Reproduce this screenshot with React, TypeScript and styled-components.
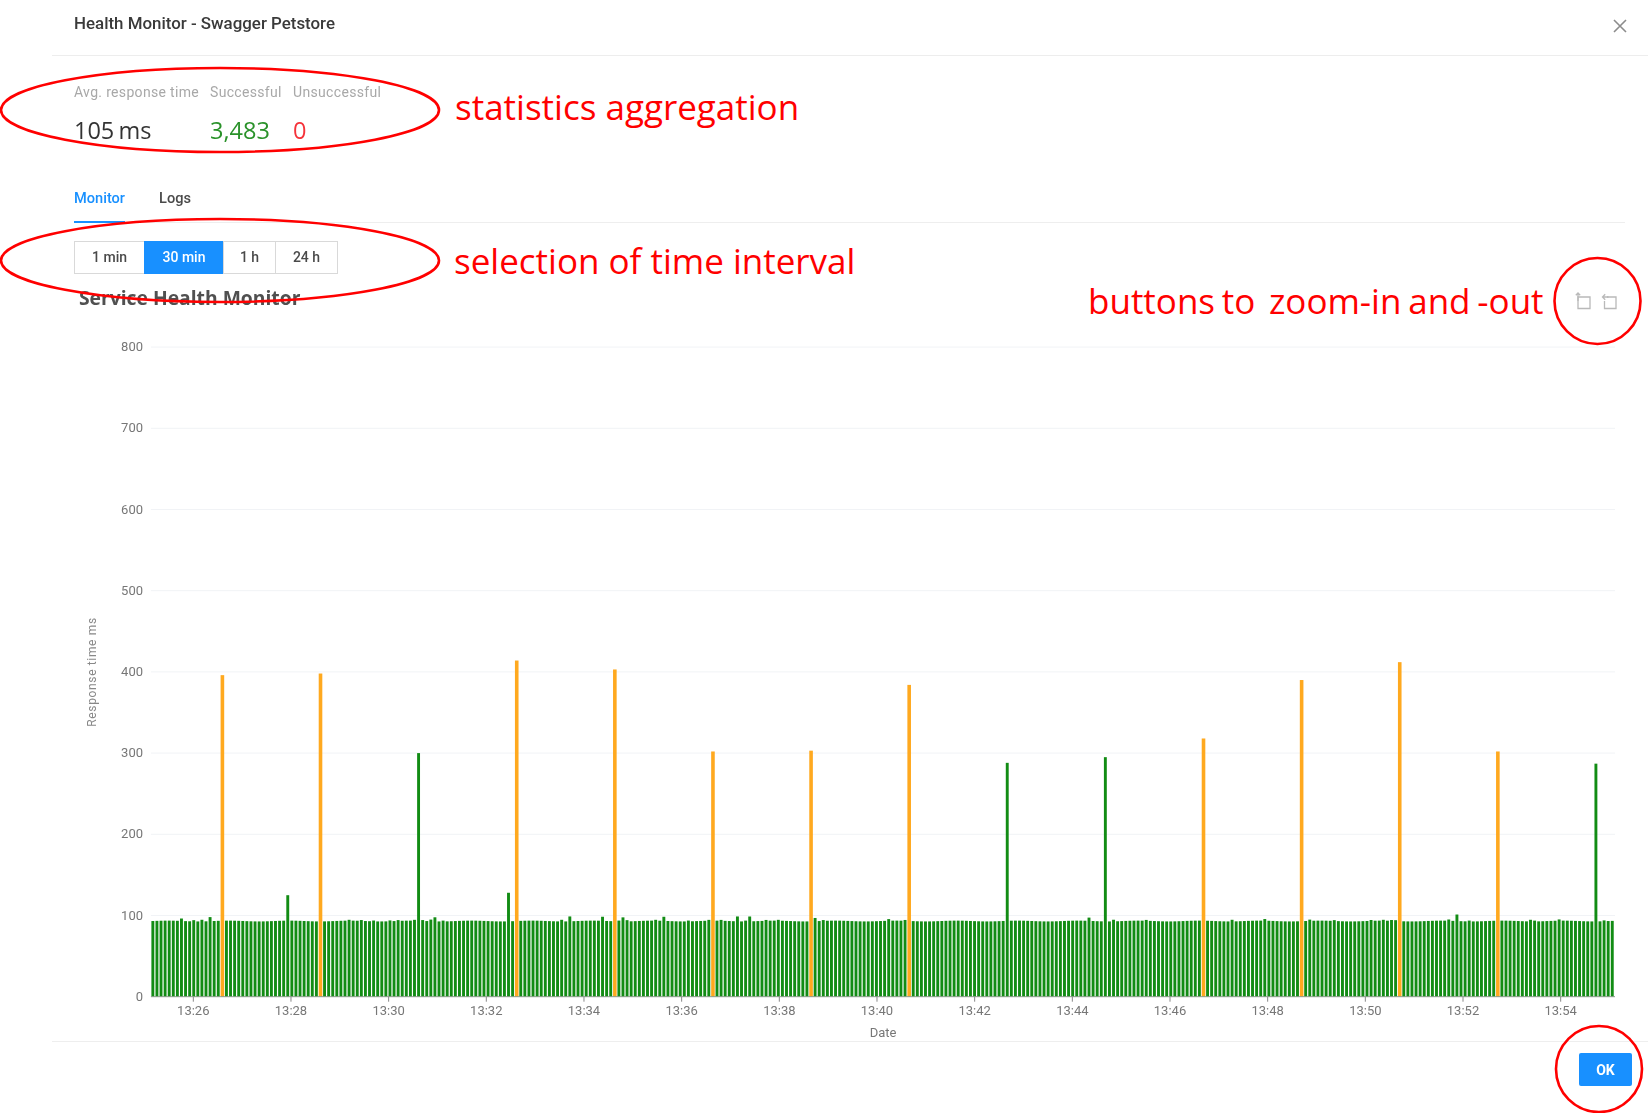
import React from 'react';
import styled, { createGlobalStyle } from 'styled-components';

const GlobalStyle = createGlobalStyle`
  html, body {
    margin: 0;
    padding: 0;
    background: #fff;
    font-family: Roboto, "Liberation Sans", sans-serif;
  }
`;

const Page = styled.div`
  position: relative;
  width: 1648px;
  height: 1113px;
  overflow: hidden;
  background: #fff;
`;

const Modal = styled.div`
  display: flex;
  flex-direction: column;
  height: 100%;
  filter: blur(0.5px);
`;

const Header = styled.header`
  display: flex;
  align-items: center;
  justify-content: space-between;
  height: 47px;
  padding: 0 21px 8px 22px;
  margin-left: 52px;
  border-bottom: 1px solid #ededed;
`;

const Title = styled.h1`
  margin: -2px 0 0;
  font-size: 16.9px;
  font-weight: 500;
  color: #3a3a3a;
`;

const CloseIcon = styled.svg`
  display: block;
  margin-top: 4px;
`;

const Body = styled.div`
  padding: 0 23px 0 74px;
`;

const Stats = styled.div`
  display: flex;
  margin-top: 27px;
`;

const Stat = styled.div<{ $width: number }>`
  width: ${(p) => p.$width}px;
`;

const StatLabel = styled.div`
  font-size: 14px;
  line-height: 18px;
  letter-spacing: 0.33px;
  color: #a8a8a8;
  white-space: nowrap;
`;

const StatValue = styled.div<{ $color: string }>`
  margin-top: 12px;
  font-family: "Open Sans", sans-serif;
  font-size: 23.5px;
  line-height: 34px;
  word-spacing: -2px;
  color: ${(p) => p.$color};
  white-space: nowrap;
`;

const Tabs = styled.div`
  display: flex;
  gap: 34px;
  height: 46px;
  margin-top: 28.5px;
  border-bottom: 1px solid #eee;
`;

const Tab = styled.div<{ $active?: boolean }>`
  height: 45px;
  font-size: 14.6px;
  font-weight: 500;
  line-height: 44px;
  color: ${(p) => (p.$active ? '#1890ff' : '#4a4a4a')};
  border-bottom: 2px solid ${(p) => (p.$active ? '#1890ff' : 'transparent')};
`;

const Segments = styled.div`
  display: flex;
  width: fit-content;
  margin-top: 18px;
`;

const Segment = styled.div<{ $width: number; $active?: boolean }>`
  box-sizing: border-box;
  width: ${(p) => p.$width}px;
  height: 33px;
  margin-left: -1px;
  border: 1px solid ${(p) => (p.$active ? '#1890ff' : '#d9d9d9')};
  background: ${(p) => (p.$active ? '#1890ff' : '#fff')};
  color: ${(p) => (p.$active ? '#fff' : '#4a4a4a')};
  font-size: 14px;
  font-weight: 500;
  line-height: 31px;
  text-align: center;
  &:first-child {
    margin-left: 0;
  }
`;

const ChartHead = styled.div`
  display: flex;
  align-items: center;
  justify-content: space-between;
  height: 28px;
  margin-top: 9.5px;
  padding: 0 30px 0 5px;
  margin-right: -23px;
`;

const ChartTitle = styled.h2`
  margin: 0;
  font-family: "Open Sans", sans-serif;
  font-size: 19.3px;
  font-weight: 700;
  color: #505050;
`;

const ZoomTools = styled.div`
  display: flex;
  gap: 9px;
  margin-top: 8px;
`;

const ChartSvg = styled.svg`
  display: block;
  width: 1648px;
  height: 730px;
  font-family: Roboto, "Liberation Sans", sans-serif;
`;

const Footer = styled.footer`
  display: flex;
  justify-content: flex-end;
  margin-left: 52px;
  padding: 11px 16px 0 0;
  border-top: 1px solid #eee;
`;

const OkButton = styled.button`
  width: 53px;
  height: 33px;
  padding: 0;
  border: 0;
  border-radius: 2px;
  background: #1890ff;
  color: #fff;
  font-family: inherit;
  font-size: 14px;
  font-weight: 700;
`;

const Marks = styled.svg`
  position: absolute;
  inset: 0;
  pointer-events: none;
`;

const Note = styled.div<{ $left: number; $top: number; $tight?: boolean }>`
  position: absolute;
  left: ${(p) => p.$left}px;
  top: ${(p) => p.$top}px;
  font-family: "Open Sans", sans-serif;
  font-size: 35px;
  line-height: 44px;
  word-spacing: ${(p) => (p.$tight ? '-2.3px' : '0')};
  color: #ff0000;
  white-space: pre;
`;

// chart is drawn in page x, y is offset by where the svg starts
const CHART_TOP = 311;
const AXIS_Y = 996.7 - CHART_TOP;
const PER_UNIT = 0.812;
const LEFT = 150.9;
const PITCH = 4.088;
const BAR_COUNT = 358;

const SPIKES: Record<number, [number, boolean]> = {
  17: [396, true],
  33: [125, false],
  41: [398, true],
  65: [300, false],
  87: [128, false],
  89: [414, true],
  113: [403, true],
  137: [302, true],
  161: [303, true],
  185: [384, true],
  209: [288, false],
  233: [295, false],
  257: [318, true],
  281: [390, true],
  305: [412, true],
  329: [302, true],
  353: [287, false],
};

const BUMPS: Record<number, number> = {
  7: 3, 10: 1.5, 12: 2, 14: 5, 48: 1, 51: 1, 54: 1, 58: 1, 60: 1, 64: 1, 66: 1, 68: 2, 69: 5, 71: 1,
  100: 2, 102: 6, 110: 5, 114: 1, 115: 5, 116: 1.5, 123: 1, 125: 5, 131: 1, 136: 1, 139: 1, 143: 6,
  145: 1, 146: 6, 150: 1, 153: 1, 162: 4, 164: 1, 180: 2, 184: 1, 229: 4, 235: 2, 243: 1, 264: 2,
  272: 2, 283: 1.5, 289: 1, 298: 1, 301: 1, 303: 1, 304: 1, 317: 1.5, 319: 8, 322: 1, 337: 2, 338: 1,
  344: 1.5, 355: 1,
};

const barValue = (i: number) => {
  if (SPIKES[i]) return SPIKES[i][0];
  return 93.2 + (BUMPS[i] || 0) + Math.sin(i * 12.9898) * 0.5;
};

const bars = Array.from({ length: BAR_COUNT }, (_, i) => ({
  x: LEFT + i * PITCH + 0.5,
  h: barValue(i) * PER_UNIT,
  orange: SPIKES[i] ? SPIKES[i][1] : false,
}));

const yTicks = [0, 100, 200, 300, 400, 500, 600, 700, 800];
const xTicks = ['13:26', '13:28', '13:30', '13:32', '13:34', '13:36', '13:38', '13:40', '13:42', '13:44', '13:46', '13:48', '13:50', '13:52', '13:54'];

const ZoomIcon = ({ back }: { back?: boolean }) => (
  <svg width="17" height="18" viewBox="0 0 17 18" fill="none" stroke="#b9b9b9" strokeWidth="1.3">
    {back ? (
      <>
        <path d="M6 5h9v11.5H3.5V9" />
        <path d="M7.5 5H1.5M4.2 2.2 1.5 5l2.7 2.8" />
      </>
    ) : (
      <>
        <path d="M3 5h12v11.5H3z" />
        <path d="M3 9V1M.8 3.2 3 1l2.2 2.2" />
      </>
    )}
  </svg>
);

const Chart = () => (
  <ChartSvg viewBox={`0 0 1648 730`}>
    {yTicks.map((v) => {
      const y = AXIS_Y - v * PER_UNIT;
      return (
        <g key={v}>
          {v > 0 && <line x1={LEFT} x2={1615} y1={y} y2={y} stroke="#f1f3f6" strokeWidth="1" />}
          <text x={143} y={y + 4} textAnchor="end" fontSize="13" fill="#777">
            {v}
          </text>
        </g>
      );
    })}
    {bars.map((b, i) => (
      <rect
        key={i}
        x={b.orange ? b.x - 0.3 : b.x}
        y={AXIS_Y - b.h}
        width={b.orange ? 3.6 : 2.9}
        height={b.h}
        fill={b.orange ? '#ffa91f' : '#128c14'}
      />
    ))}
    <line x1={LEFT} x2={1615} y1={AXIS_Y} y2={AXIS_Y} stroke="#8a9a8a" strokeWidth="1" />
    {xTicks.map((t, i) => {
      const x = 193.3 + i * 97.67;
      return (
        <g key={t}>
          <line x1={x} x2={x} y1={AXIS_Y} y2={AXIS_Y + 5} stroke="#888" strokeWidth="1" />
          <text x={x} y={AXIS_Y + 18} textAnchor="middle" fontSize="13" fill="#777">
            {t}
          </text>
        </g>
      );
    })}
    <text x={883} y={1037 - CHART_TOP} textAnchor="middle" fontSize="13" fill="#777">
      Date
    </text>
    <text
      transform={`translate(95.5 ${672 - CHART_TOP}) rotate(-90)`}
      textAnchor="middle"
      fontSize="12"
      letterSpacing="0.65"
      fill="#888"
    >
      Response time ms
    </text>
  </ChartSvg>
);

export default function App() {
  return (
    <Page>
      <GlobalStyle />
      <Modal>
        <Header>
          <Title>Health Monitor - Swagger Petstore</Title>
          <CloseIcon width="14" height="14" viewBox="0 0 14 14" stroke="#8c8c8c" strokeWidth="1.6">
            <path d="M1 1l12 12M13 1 1 13" />
          </CloseIcon>
        </Header>
        <Body>
          <Stats>
            <Stat $width={136}>
              <StatLabel>Avg. response time</StatLabel>
              <StatValue $color="#333">105 ms</StatValue>
            </Stat>
            <Stat $width={83}>
              <StatLabel>Successful</StatLabel>
              <StatValue $color="#2a922a">3,483</StatValue>
            </Stat>
            <Stat $width={100}>
              <StatLabel>Unsuccessful</StatLabel>
              <StatValue $color="#f5333a">0</StatValue>
            </Stat>
          </Stats>
          <Tabs>
            <Tab $active>Monitor</Tab>
            <Tab>Logs</Tab>
          </Tabs>
          <Segments>
            <Segment $width={71}>1 min</Segment>
            <Segment $active $width={80}>30 min</Segment>
            <Segment $width={53}>1 h</Segment>
            <Segment $width={63}>24 h</Segment>
          </Segments>
          <ChartHead>
            <ChartTitle>Service Health Monitor</ChartTitle>
            <ZoomTools>
              <ZoomIcon />
              <ZoomIcon back />
            </ZoomTools>
          </ChartHead>
        </Body>
        <Chart />
        <Footer>
          <OkButton>OK</OkButton>
        </Footer>
      </Modal>
      <Marks width="1648" height="1113" fill="none" stroke="#ff0000" strokeWidth="2.6">
        <ellipse cx="220" cy="110" rx="219" ry="42" />
        <ellipse cx="220" cy="260.5" rx="219" ry="41.5" />
        <circle cx="1597.5" cy="301" r="43" />
        <circle cx="1599" cy="1069" r="43" />
      </Marks>
      <Note $left={455} $top={85}>statistics aggregation</Note>
      <Note $left={454} $top={239}>selection of time interval</Note>
      <Note $left={1088} $top={279} $tight>{'buttons to  zoom-in and -out'}</Note>
    </Page>
  );
}
